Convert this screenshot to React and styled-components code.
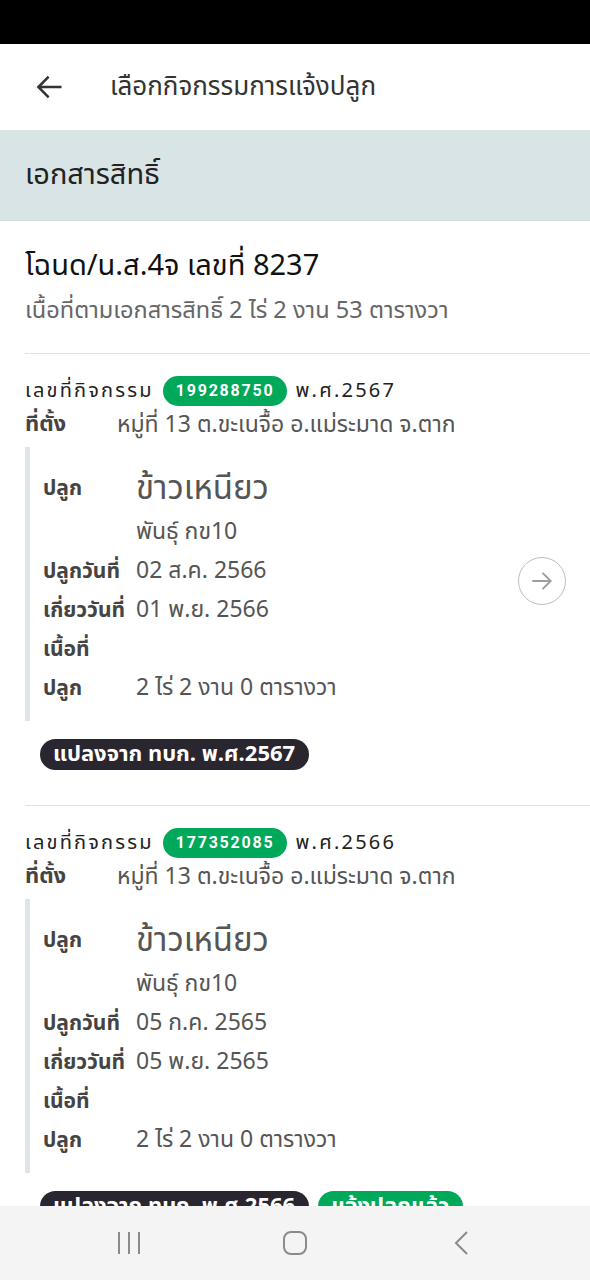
import React from "react";
import styled, { createGlobalStyle } from "styled-components";

const Global = createGlobalStyle`
  html, body {
    margin: 0;
    padding: 0;
    background: #fff;
  }
  body {
    font-family: "Noto Sans Thai", "Noto Sans Thai UI", "Noto Sans", "DejaVu Sans", sans-serif;
    color: #222;
  }
`;

const Screen = styled.div`
  width: 590px;
  min-height: 1280px;
  overflow: hidden;
`;

const StatusBar = styled.div`
  height: 44px;
  background: #000;
`;

const Header = styled.div`
  height: 86px;
  display: flex;
  align-items: center;
  gap: 46px;
  padding-left: 34px;
  box-sizing: border-box;
`;

const HeaderTitle = styled.div`
  font-size: 26px;
  color: #333;
`;

const SectionBar = styled.div`
  height: 91px;
  background: #d9e4e6;
  display: flex;
  align-items: center;
  padding-left: 25px;
  font-size: 29px;
  color: #222;
  border-bottom: 1px solid #d0dadd;
  box-sizing: border-box;
`;

const Doc = styled.div`
  margin-left: 25px;
  padding: 23px 0 24px;
  border-bottom: 1px solid #e2e2e2;
`;

const DocTitle = styled.div`
  font-size: 29px;
  color: #111;
  line-height: 44px;
`;

const DocSub = styled.div`
  margin-top: 5px;
  font-size: 23.6px;
  color: #666;
  line-height: 36px;
`;

const Card = styled.div`
  margin-left: 25px;
  padding: 21px 0 35px;
  border-bottom: 1px solid #e2e2e2;
`;

const IdRow = styled.div`
  display: flex;
  align-items: center;
  gap: 9px;
  font-size: 20px;
  letter-spacing: 2.2px;
  color: #222;
  line-height: 32px;
`;

const Badge = styled.span`
  background: #00a859;
  color: #fff;
  border-radius: 15px;
  font-family: "Roboto", "Noto Sans", sans-serif;
  font-weight: 700;
  font-size: 16px;
  letter-spacing: 1.8px;
  padding: 0 12px 0 13px;
  line-height: 30px;
`;

const LocRow = styled.div`
  display: flex;
  margin-top: 2px;
  font-size: 23px;
  line-height: 32px;
`;

const LocLabel = styled.span`
  width: 92px;
  font-weight: 700;
  font-size: 22px;
  color: #444;
`;

const LocValue = styled.span`
  color: #555;
`;

const Body = styled.div`
  display: flex;
  align-items: center;
  margin-top: 6px;
`;

const Detail = styled.div`
  flex: 1;
  border-left: 5px solid #dce5e8;
  padding: 18px 0 13px 13px;
  display: grid;
  grid-template-columns: 93px 1fr;
  align-items: center;
`;

const Label = styled.div`
  font-weight: 700;
  font-size: 21px;
  color: #444;
  line-height: ${({ $tall }) => ($tall ? "48px" : "39px")};
  white-space: nowrap;
`;

const Value = styled.div`
  font-size: ${({ $big }) => ($big ? "33px" : "23px")};
  color: #555;
  line-height: ${({ $big }) => ($big ? "48px" : "39px")};
`;

const ArrowButton = styled.div`
  width: 48px;
  height: 48px;
  border-radius: 50%;
  border: 1px solid #bdbdbd;
  box-sizing: border-box;
  display: flex;
  align-items: center;
  justify-content: center;
  margin: -6px 24px 0 0;
  flex: none;
`;

const Tags = styled.div`
  display: flex;
  gap: 9px;
  margin: 18px 0 0 15px;
`;

const Tag = styled.span`
  background: ${({ $green }) => ($green ? "#00a859" : "#2a2630")};
  color: #fff;
  font-weight: 700;
  font-size: 22px;
  border-radius: 16px;
  padding: 0 14px 0 13px;
  line-height: 31px;
`;

const NavBar = styled.div`
  position: fixed;
  left: 0;
  bottom: 0;
  width: 590px;
  height: 74px;
  background: #f4f4f4;
  display: flex;
  align-items: center;
  justify-content: center;
  gap: 140px;
`;

const BackIcon = () => (
  <svg width="30" height="30" viewBox="0 0 24 24" fill="none" stroke="#333" strokeWidth="2" strokeLinecap="square">
    <path d="M21 12H4M11 4.5L3.5 12l7.5 7.5" />
  </svg>
);

const NextIcon = () => (
  <svg width="26" height="26" viewBox="0 0 24 24" fill="none" stroke="#9e9e9e" strokeWidth="1.8">
    <path d="M3 12h17M12.5 4.5L20 12l-7.5 7.5" />
  </svg>
);

const cards = [
  {
    id: "199288750",
    year: "พ.ศ.2567",
    plantDate: "02 ส.ค. 2566",
    harvestDate: "01 พ.ย. 2566",
    tags: [{ text: "แปลงจาก ทบก. พ.ศ.2567" }],
    arrow: true,
  },
  {
    id: "177352085",
    year: "พ.ศ.2566",
    plantDate: "05 ก.ค. 2565",
    harvestDate: "05 พ.ย. 2565",
    tags: [{ text: "แปลงจาก ทบก. พ.ศ.2566" }, { text: "แจ้งปลูกแล้ว", green: true }],
    arrow: false,
  },
];

const ActivityCard = ({ c }) => (
  <Card>
    <IdRow>
      <span>เลขที่กิจกรรม</span>
      <Badge>{c.id}</Badge>
      <span>{c.year}</span>
    </IdRow>
    <LocRow>
      <LocLabel>ที่ตั้ง</LocLabel>
      <LocValue>หมู่ที่ 13 ต.ขะเนจื้อ อ.แม่ระมาด จ.ตาก</LocValue>
    </LocRow>
    <Body>
      <Detail>
        <Label $tall>ปลูก</Label>
        <Value $big>ข้าวเหนียว</Value>
        <span />
        <Value>พันธุ์ กข10</Value>
        <Label>ปลูกวันที่</Label>
        <Value>{c.plantDate}</Value>
        <Label>เกี่ยววันที่</Label>
        <Value>{c.harvestDate}</Value>
        <Label>เนื้อที่</Label>
        <span />
        <Label>ปลูก</Label>
        <Value>2 ไร่ 2 งาน 0 ตารางวา</Value>
      </Detail>
      {c.arrow && (
        <ArrowButton>
          <NextIcon />
        </ArrowButton>
      )}
    </Body>
    <Tags>
      {c.tags.map((t) => (
        <Tag key={t.text} $green={t.green}>
          {t.text}
        </Tag>
      ))}
    </Tags>
  </Card>
);

export default function App() {
  return (
    <Screen>
      <Global />
      <StatusBar />
      <Header>
        <BackIcon />
        <HeaderTitle>เลือกกิจกรรมการแจ้งปลูก</HeaderTitle>
      </Header>
      <SectionBar>เอกสารสิทธิ์</SectionBar>
      <Doc>
        <DocTitle>โฉนด/น.ส.4จ เลขที่ 8237</DocTitle>
        <DocSub>เนื้อที่ตามเอกสารสิทธิ์ 2 ไร่ 2 งาน 53 ตารางวา</DocSub>
      </Doc>
      {cards.map((c) => (
        <ActivityCard key={c.id} c={c} />
      ))}
      <NavBar>
        <svg width="26" height="26" viewBox="0 0 26 26" stroke="#8a8a8a" strokeWidth="2">
          <path d="M3 2v22M13 2v22M23 2v22" />
        </svg>
        <svg width="26" height="26" viewBox="0 0 26 26" fill="none" stroke="#8a8a8a" strokeWidth="2">
          <rect x="2" y="2" width="22" height="22" rx="7" />
        </svg>
        <svg width="26" height="26" viewBox="0 0 26 26" fill="none" stroke="#8a8a8a" strokeWidth="2">
          <path d="M19 2L8 13l11 11" />
        </svg>
      </NavBar>
    </Screen>
  );
}
